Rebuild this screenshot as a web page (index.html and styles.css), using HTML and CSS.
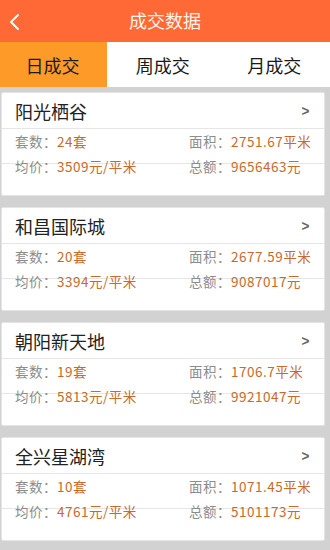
FILE: index.html
```html
<!DOCTYPE html>
<html lang="zh">
<head>
<meta charset="utf-8">
<link rel="stylesheet" href="styles.css">
</head>
<body>
<div class="header">
  <svg class="back" width="12" height="18" viewBox="0 0 12 18"><polyline points="10,2 3,9 10,16" fill="none" stroke="#fff" stroke-width="2" stroke-linecap="round" stroke-linejoin="round"/></svg>
  <div class="title">成交数据</div>
</div>
<div class="tabs">
  <div class="tab active">日成交</div>
  <div class="tab">周成交</div>
  <div class="tab">月成交</div>
</div>
<div class="list">
  <div class="card">
    <div class="card-head"><span class="name">阳光栖谷</span><span class="arrow">&gt;</span></div>
    <div class="row row1"><span class="cell"><span class="lbl">套数：</span><span class="val">24套</span></span><span class="cell right"><span class="lbl">面积：</span><span class="val">2751.67平米</span></span></div>
    <div class="row row2"><span class="cell"><span class="lbl">均价：</span><span class="val">3509元/平米</span></span><span class="cell right"><span class="lbl">总额：</span><span class="val">9656463元</span></span></div>
  </div>
  <div class="card">
    <div class="card-head"><span class="name">和昌国际城</span><span class="arrow">&gt;</span></div>
    <div class="row row1"><span class="cell"><span class="lbl">套数：</span><span class="val">20套</span></span><span class="cell right"><span class="lbl">面积：</span><span class="val">2677.59平米</span></span></div>
    <div class="row row2"><span class="cell"><span class="lbl">均价：</span><span class="val">3394元/平米</span></span><span class="cell right"><span class="lbl">总额：</span><span class="val">9087017元</span></span></div>
  </div>
  <div class="card">
    <div class="card-head"><span class="name">朝阳新天地</span><span class="arrow">&gt;</span></div>
    <div class="row row1"><span class="cell"><span class="lbl">套数：</span><span class="val">19套</span></span><span class="cell right"><span class="lbl">面积：</span><span class="val">1706.7平米</span></span></div>
    <div class="row row2"><span class="cell"><span class="lbl">均价：</span><span class="val">5813元/平米</span></span><span class="cell right"><span class="lbl">总额：</span><span class="val">9921047元</span></span></div>
  </div>
  <div class="card">
    <div class="card-head"><span class="name">全兴星湖湾</span><span class="arrow">&gt;</span></div>
    <div class="row row1"><span class="cell"><span class="lbl">套数：</span><span class="val">10套</span></span><span class="cell right"><span class="lbl">面积：</span><span class="val">1071.45平米</span></span></div>
    <div class="row row2"><span class="cell"><span class="lbl">均价：</span><span class="val">4761元/平米</span></span><span class="cell right"><span class="lbl">总额：</span><span class="val">5101173元</span></span></div>
  </div>
</div>
</body>
</html>
```
FILE: styles.css
```css
* { box-sizing: border-box; }
html, body { margin: 0; padding: 0; }
body {
  width: 330px;
  height: 550px;
  overflow: hidden;
  background: #d2d2d2;
  font-family: "Noto Sans CJK SC", "Noto Sans", sans-serif;
}
.header {
  height: 42px;
  background: #fe6935;
  display: flex;
  align-items: center;
  justify-content: center;
  position: relative;
}
.back {
  position: absolute;
  left: 8px;
  top: 13px;
}
.title {
  color: #fff4ec;
  font-size: 18px;
  line-height: 42px;
  margin-top: -2px;
}
.tabs {
  display: flex;
  height: 45px;
  background: #fff;
}
.tab {
  flex: 1;
  display: flex;
  align-items: center;
  justify-content: center;
  font-size: 18px;
  color: #1a1a1a;
}
.tab.active {
  flex: 0 0 107px;
  background: #fd9a28;
  padding-right: 2px;
}
.list {
  display: flex;
  flex-direction: column;
  gap: 11px;
  padding: 5px 5px 0 1px;
}
.card {
  background: #fff;
  height: 104px;
  border-radius: 2px;
  border: 1px solid #e4e4e4;
}
.card-head {
  height: 36px;
  display: flex;
  align-items: center;
  justify-content: space-between;
  padding: 0 14px 0 13px;
  border-bottom: 1px solid #e6e6e6;
}
.name {
  font-size: 18px;
  color: #222;
}
.arrow {
  font-family: "Liberation Sans", sans-serif;
  font-size: 15px;
  color: #666;
  font-weight: bold;
  transform: scaleX(0.9);
}
.row {
  display: flex;
  justify-content: space-between;
  padding: 0 14px 0 13px;
  font-size: 13.5px;
  line-height: 18px;
  letter-spacing: 0.5px;
}
.row1 {
  height: 35px;
  padding-top: 3px;
  border-bottom: 1px solid #e6e6e6;
}
.row2 {
  margin-top: -7px;
}
.cell { white-space: nowrap; }
.right { width: 121px; }
.lbl { color: #8c8c8c; }
.val { color: #c86a2b; }
```
